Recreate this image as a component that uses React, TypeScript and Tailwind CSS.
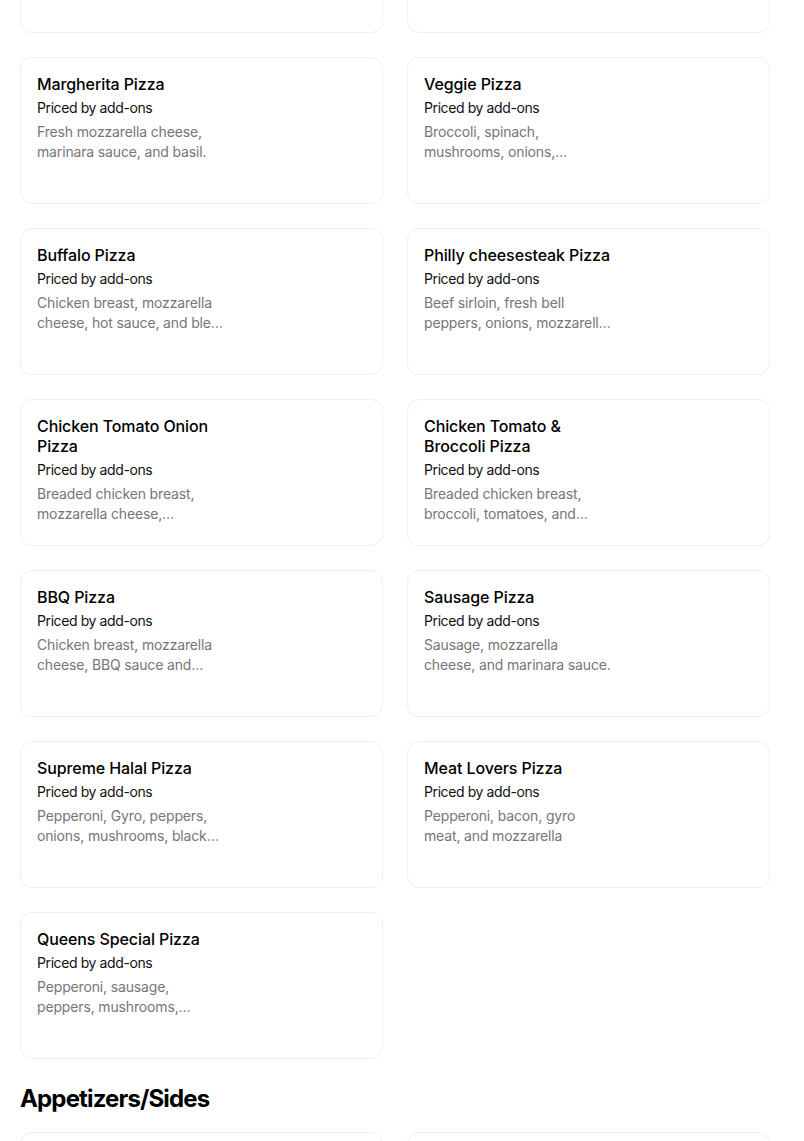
import React from "react";

type Item = { title: string; lines: [string, string] };

const items: Item[] = [
  { title: "", lines: ["", ""] },
  { title: "", lines: ["", ""] },
  { title: "Margherita Pizza", lines: ["Fresh mozzarella cheese,", "marinara sauce, and basil."] },
  { title: "Veggie Pizza", lines: ["Broccoli, spinach,", "mushrooms, onions,…"] },
  { title: "Buffalo Pizza", lines: ["Chicken breast, mozzarella", "cheese, hot sauce, and ble…"] },
  { title: "Philly cheesesteak Pizza", lines: ["Beef sirloin, fresh bell", "peppers, onions, mozzarell…"] },
  { title: "Chicken Tomato Onion Pizza", lines: ["Breaded chicken breast,", "mozzarella cheese,…"] },
  { title: "Chicken Tomato & Broccoli Pizza", lines: ["Breaded chicken breast,", "broccoli, tomatoes, and…"] },
  { title: "BBQ Pizza", lines: ["Chicken breast, mozzarella", "cheese, BBQ sauce and…"] },
  { title: "Sausage Pizza", lines: ["Sausage, mozzarella", "cheese, and marinara sauce."] },
  { title: "Supreme Halal Pizza", lines: ["Pepperoni, Gyro, peppers,", "onions, mushrooms, black…"] },
  { title: "Meat Lovers Pizza", lines: ["Pepperoni, bacon, gyro", "meat, and mozzarella"] },
  { title: "Queens Special Pizza", lines: ["Pepperoni, sausage,", "peppers, mushrooms,…"] },
];

function Card({ item }: { item: Item }) {
  return (
    <div className="h-[147px] rounded-xl border border-[#efefef] bg-white p-4">
      {item.title && (
        <div className="w-[200px]">
          <div className="text-[16px] leading-5 font-medium tracking-[-0.1px] text-black">{item.title}</div>
          <div className="mt-1 text-[14px] leading-5 tracking-[-0.4px] text-[#111]">Priced by add-ons</div>
          <div className="mt-1 text-[14px] leading-5 tracking-[-0.15px] text-[#767676]">
            <div className="whitespace-nowrap">{item.lines[0]}</div>
            <div className="whitespace-nowrap">{item.lines[1]}</div>
          </div>
        </div>
      )}
    </div>
  );
}

export default function App() {
  return (
    <div
      className="h-[1141px] overflow-hidden bg-white px-5"
      style={{ fontFamily: "Inter, 'Noto Sans', sans-serif" }}
    >
      <div className="w-[750px] mt-[-114px]">
        <div className="grid grid-cols-2 gap-6">
          {items.map((it, i) => (
            <Card key={i} item={it} />
          ))}
        </div>
        <h2 className="mt-[24px] text-[24px] leading-[32px] font-bold tracking-[-0.85px] text-black">
          Appetizers/Sides
        </h2>
        <div className="mt-[17px] grid grid-cols-2 gap-6">
          <Card item={{ title: "", lines: ["", ""] }} />
          <Card item={{ title: "", lines: ["", ""] }} />
        </div>
      </div>
    </div>
  );
}
